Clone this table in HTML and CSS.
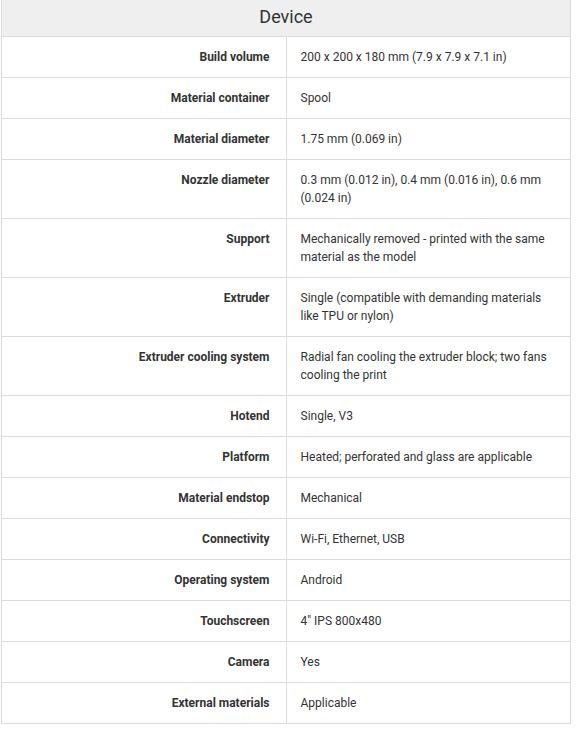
FILE: index.html
```html
<!DOCTYPE html>
<html>
<head>
<meta charset="utf-8">
<link rel="stylesheet" href="styles.css">
</head>
<body>
<table class="specs">
  <thead>
    <tr><th colspan="2" class="head">Device</th></tr>
  </thead>
  <tbody>
    <tr><th>Build volume</th><td>200 x 200 x 180 mm (7.9 x 7.9 x 7.1 in)</td></tr>
    <tr><th>Material container</th><td>Spool</td></tr>
    <tr><th>Material diameter</th><td>1.75 mm (0.069 in)</td></tr>
    <tr><th>Nozzle diameter</th><td>0.3 mm (0.012 in), 0.4 mm (0.016 in), 0.6 mm (0.024 in)</td></tr>
    <tr><th>Support</th><td>Mechanically removed - printed with the same material as the model</td></tr>
    <tr><th>Extruder</th><td>Single (compatible with demanding materials like TPU or nylon)</td></tr>
    <tr><th>Extruder cooling system</th><td>Radial fan cooling the extruder block; two fans cooling the print</td></tr>
    <tr><th>Hotend</th><td>Single, V3</td></tr>
    <tr><th>Platform</th><td>Heated; perforated and glass are applicable</td></tr>
    <tr><th>Material endstop</th><td>Mechanical</td></tr>
    <tr><th>Connectivity</th><td>Wi-Fi, Ethernet, USB</td></tr>
    <tr><th>Operating system</th><td>Android</td></tr>
    <tr><th>Touchscreen</th><td>4" IPS 800x480</td></tr>
    <tr><th>Camera</th><td>Yes</td></tr>
    <tr><th>External materials</th><td>Applicable</td></tr>
  </tbody>
</table>
</body>
</html>
```
FILE: styles.css
```css
html, body {
  margin: 0;
  padding: 0;
  background: #fff;
}
body {
  padding: 0 5px 0 1px;
  font-family: Roboto, "Liberation Sans", sans-serif;
  color: #333;
}
.specs {
  width: 570px;
  border-collapse: collapse;
  table-layout: fixed;
  font-size: 12px;
  line-height: 18px;
}
.specs th, .specs td {
  border: 1px solid #dcdcdc;
  vertical-align: top;
  padding: 11px 15px 11px 15px;
}
.specs .head {
  background: #efefef;
  font-weight: 400;
  font-size: 18px;
  line-height: 24px;
  text-align: center;
  padding: 5px 0 7px;
  color: #333;
  border-top: none;
}
.specs tbody th {
  width: 254px;
  text-align: right;
  font-weight: 700;
  padding-right: 16px;
}
.specs tbody td {
  text-align: left;
  padding-left: 14px;
  padding-right: 14px;
}
```
